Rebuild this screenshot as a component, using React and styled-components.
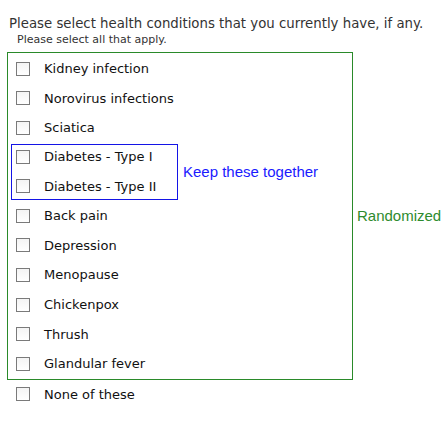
import React from "react";
import styled, { createGlobalStyle } from "styled-components";

const Global = createGlobalStyle`
  html, body { margin: 0; padding: 0; background: #fff; }
  body { font-family: "DejaVu Sans", Verdana, sans-serif; color: #222; }
`;

const Page = styled.div`
  padding: 14px 0 0 9px;
  width: 444px;
  box-sizing: border-box;
`;

const Title = styled.div`
  font-size: 13.3px;
  line-height: 19px;
  color: #333;
`;

const Subtitle = styled.div`
  font-size: 11px;
  line-height: 14px;
  color: #333;
  margin: 0 0 0 8px;
`;

const RandomArea = styled.div`
  display: flex;
  align-items: center;
  margin: 5px 0 0 -2px;
`;

const GreenBox = styled.div`
  width: 346px;
  border: 1px solid #2a8a2a;
  padding: 1px 0 0 3px;
  box-sizing: border-box;
`;

const SideLabel = styled.span`
  font-family: "Liberation Sans", Arial, sans-serif;
  font-size: 15px;
  color: ${(p) => p.$color};
  margin-left: ${(p) => p.$gap}px;
  white-space: nowrap;
`;

const Row = styled.label`
  display: flex;
  align-items: center;
  height: 29.6px;
  padding-left: ${(p) => p.$indent}px;
  font-size: 13px;
  color: #111;
`;

const Box = styled.span`
  width: 14px;
  height: 14px;
  box-sizing: border-box;
  border: 1px solid #7a7a7a;
  background: linear-gradient(#f4f4f4, #ffffff);
  margin-right: 14px;
  flex: none;
`;

const GroupArea = styled.div`
  display: flex;
  align-items: center;
`;

const BlueBox = styled.div`
  width: 167px;
  border: 1px solid #1414e6;
  box-sizing: border-box;
  margin: 1px 0;
`;

const GroupRows = styled.div`
  margin: -3px 0 -2px;
`;

const Option = ({ text, indent }) => (
  <Row $indent={indent}>
    <Box />
    {text}
  </Row>
);

const before = ["Kidney infection", "Norovirus infections", "Sciatica"];
const group = ["Diabetes - Type I", "Diabetes - Type II"];
const after = [
  "Back pain",
  "Depression",
  "Menopause",
  "Chickenpox",
  "Thrush",
  "Glandular fever",
];

export default function App() {
  return (
    <>
      <Global />
      <Page>
        <Title>Please select health conditions that you currently have, if any.</Title>
        <Subtitle>Please select all that apply.</Subtitle>
        <RandomArea>
          <GreenBox>
            {before.map((t) => (
              <Option key={t} text={t} indent={5} />
            ))}
            <GroupArea>
              <BlueBox>
                <GroupRows>
                  {group.map((t) => (
                    <Option key={t} text={t} indent={4} />
                  ))}
                </GroupRows>
              </BlueBox>
              <SideLabel $color="#1a1aff" $gap={5}>Keep these together</SideLabel>
            </GroupArea>
            {after.map((t) => (
              <Option key={t} text={t} indent={5} />
            ))}
          </GreenBox>
          <SideLabel $color="#2e8b2e" $gap={4}>Randomized</SideLabel>
        </RandomArea>
        <Option text="None of these" indent={7} />
      </Page>
    </>
  );
}
